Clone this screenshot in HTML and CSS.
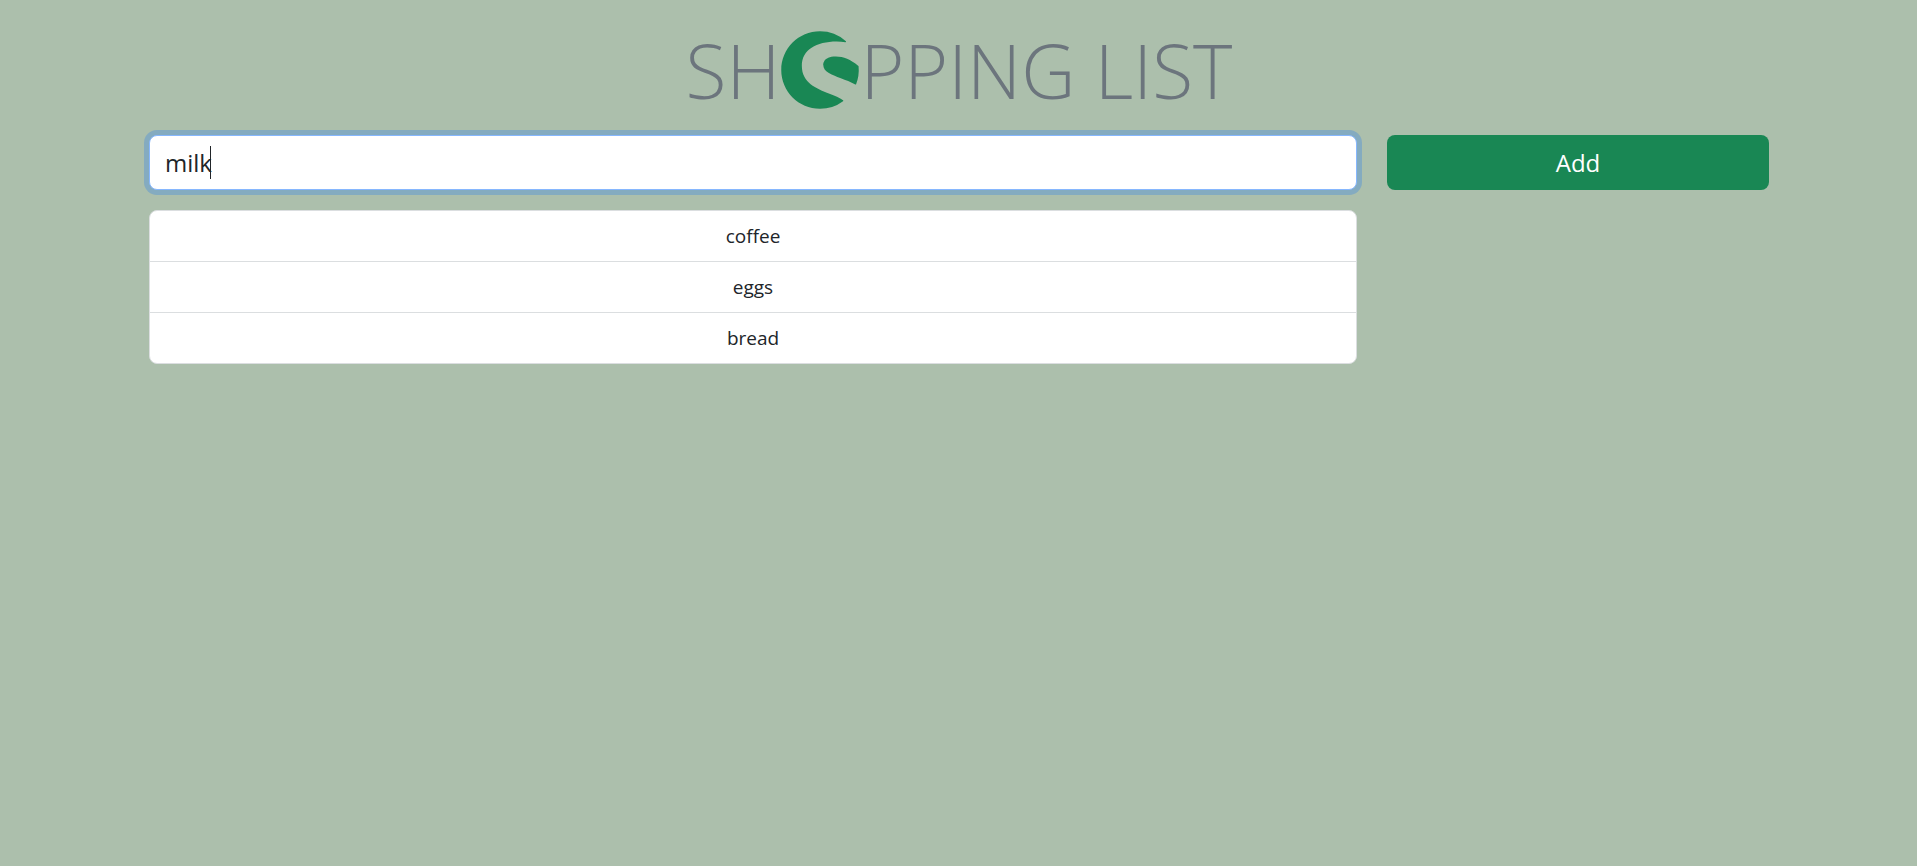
FILE: index.html
```html
<!DOCTYPE html>
<html lang="en">
<head>
  <meta charset="utf-8">
  <meta name="viewport" content="width=device-width, initial-scale=1">
  <title>Shopping List</title>
  <link rel="stylesheet" href="styles.css">
</head>
<body>
  <main class="container">
    <h1 class="title"><span>SH</span><svg class="logo" viewBox="0 0 512 512" role="img" aria-label="O"><path d="M403.5 455.41A246.17 246.17 0 0 1 256 504C118.81 504 8 393 8 256 8 118.81 119 8 256 8a247.39 247.39 0 0 1 165.7 63.5 3.57 3.57 0 0 1-2.86 6.18A418.62 418.62 0 0 0 362.13 74c-129.36 0-222.4 53.47-222.4 155.35 0 109 92.13 145.88 176.83 178.73 33.64 13 65.4 25.36 87 41.59a3.58 3.58 0 0 1 0 5.72zM503 233.09a3.64 3.64 0 0 0-1.27-2.44c-51.76-43-93.62-60.48-144.48-60.48-84.13 0-80.25 52.17-80.25 53.63 0 42.6 52.06 62 112.34 84.49 31.07 11.59 63.19 23.57 92.68 39.93a3.57 3.57 0 0 0 5-1.82A249 249 0 0 0 503 233.09z"/></svg><span>PPING LIST</span></h1>
    <form class="grid">
      <div class="field">
        <input class="field-input" type="text" value="milk" aria-label="Item">
        <span class="caret"></span>
      </div>
      <button class="add" type="button">Add</button>
    </form>
    <div class="grid">
      <ul class="list">
        <li class="item">coffee</li>
        <li class="item">eggs</li>
        <li class="item">bread</li>
      </ul>
    </div>
  </main>
</body>
</html>
```
FILE: styles.css
```css
*, *::before, *::after {
  box-sizing: border-box;
}

body {
  margin: 0;
  background: #acbfac;
  color: #212529;
  font-family: "Open Sans", "Noto Sans", sans-serif;
  font-size: 19px;
  line-height: 30px;
}

.container {
  max-width: 1651px;
  margin: 0 auto;
  padding: 22px 15px 0 16px;
}

.title {
  display: flex;
  justify-content: center;
  align-items: center;
  margin: 0 0 17px;
  color: #6c757d;
  font-size: 75px;
  font-weight: 300;
  line-height: 96px;
}

.logo {
  width: 80px;
  height: 80px;
  fill: #198754;
}

.grid {
  display: grid;
  grid-template-columns: minmax(0, 1208fr) minmax(0, 382fr);
  column-gap: 30px;
  margin-bottom: 20px;
}

.field {
  position: relative;
}

.field-input {
  display: block;
  width: 100%;
  height: 55px;
  padding: 0 15px;
  border: 1px solid #86b7fe;
  border-radius: 8px;
  outline: 0;
  background: #fff;
  box-shadow: 0 0 0 5px rgba(13, 110, 253, .25);
  color: #212529;
  font: inherit;
  font-size: 24px;
}

.caret {
  position: absolute;
  top: 11px;
  left: 61px;
  width: 1px;
  height: 33px;
  background: #212529;
}

.add {
  height: 55px;
  padding: 0 20px;
  border: 0;
  border-radius: 8px;
  background: #198754;
  color: #fff;
  font: inherit;
  font-size: 24px;
}

.list {
  margin: 0;
  padding: 0;
  overflow: hidden;
  border: 1px solid #dbdee0;
  border-radius: 8px;
  background: #fff;
  list-style: none;
  text-align: center;
}

.item {
  padding: 10px 20px;
}

.item + .item {
  border-top: 1px solid #dbdee0;
}
```
